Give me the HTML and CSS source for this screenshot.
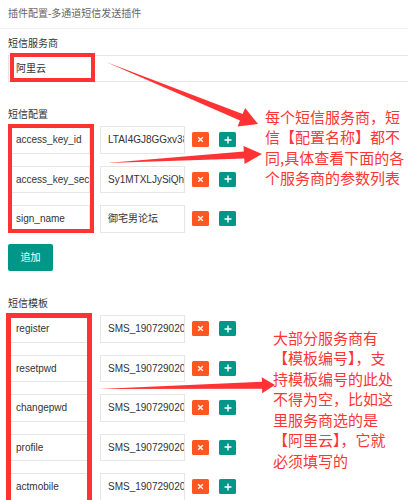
FILE: index.html
```html
<!DOCTYPE html>
<html lang="zh-CN">
<head>
<meta charset="utf-8">
<title>插件配置</title>
<link rel="stylesheet" href="styles.css">
</head>
<body>
<div class="page">
  <div class="header">插件配置-多通道短信发送插件</div>
  <div class="body">
    <div class="section">
      <div class="label">短信服务商</div>
      <div class="input wide">阿里云</div>
    </div>

    <div class="section s-config">
      <div class="label">短信配置</div>
      <div class="rows">
        <div class="row">
          <div class="input name">access_key_id</div>
          <div class="input value">LTAI4GJ8GGxv38Kp2W</div>
          <span class="btn del"><svg width="7" height="7" viewBox="0 0 7 7"><path d="M1.2 1.2L5.8 5.8M5.8 1.2L1.2 5.8" stroke="#fff" stroke-width="1.3"/></svg></span>
          <span class="btn add"><svg width="8" height="8" viewBox="0 0 8 8"><path d="M4 0.5V7.5M0.5 4H7.5" stroke="#fff" stroke-width="1.4"/></svg></span>
        </div>
        <div class="row">
          <div class="input name">access_key_secret</div>
          <div class="input value">Sy1MTXLJySiQhpR8w</div>
          <span class="btn del"><svg width="7" height="7" viewBox="0 0 7 7"><path d="M1.2 1.2L5.8 5.8M5.8 1.2L1.2 5.8" stroke="#fff" stroke-width="1.3"/></svg></span>
          <span class="btn add"><svg width="8" height="8" viewBox="0 0 8 8"><path d="M4 0.5V7.5M0.5 4H7.5" stroke="#fff" stroke-width="1.4"/></svg></span>
        </div>
        <div class="row">
          <div class="input name">sign_name</div>
          <div class="input value">御宅男论坛</div>
          <span class="btn del"><svg width="7" height="7" viewBox="0 0 7 7"><path d="M1.2 1.2L5.8 5.8M5.8 1.2L1.2 5.8" stroke="#fff" stroke-width="1.3"/></svg></span>
          <span class="btn add"><svg width="8" height="8" viewBox="0 0 8 8"><path d="M4 0.5V7.5M0.5 4H7.5" stroke="#fff" stroke-width="1.4"/></svg></span>
        </div>
      </div>
      <div class="btn-primary">追加</div>
    </div>

    <div class="section s-template">
      <div class="label">短信模板</div>
      <div class="rows">
        <div class="row">
          <div class="input name">register</div>
          <div class="input value">SMS_190729020</div>
          <span class="btn del"><svg width="7" height="7" viewBox="0 0 7 7"><path d="M1.2 1.2L5.8 5.8M5.8 1.2L1.2 5.8" stroke="#fff" stroke-width="1.3"/></svg></span>
          <span class="btn add"><svg width="8" height="8" viewBox="0 0 8 8"><path d="M4 0.5V7.5M0.5 4H7.5" stroke="#fff" stroke-width="1.4"/></svg></span>
        </div>
        <div class="row">
          <div class="input name">resetpwd</div>
          <div class="input value">SMS_190729020</div>
          <span class="btn del"><svg width="7" height="7" viewBox="0 0 7 7"><path d="M1.2 1.2L5.8 5.8M5.8 1.2L1.2 5.8" stroke="#fff" stroke-width="1.3"/></svg></span>
          <span class="btn add"><svg width="8" height="8" viewBox="0 0 8 8"><path d="M4 0.5V7.5M0.5 4H7.5" stroke="#fff" stroke-width="1.4"/></svg></span>
        </div>
        <div class="row">
          <div class="input name">changepwd</div>
          <div class="input value">SMS_190729020</div>
          <span class="btn del"><svg width="7" height="7" viewBox="0 0 7 7"><path d="M1.2 1.2L5.8 5.8M5.8 1.2L1.2 5.8" stroke="#fff" stroke-width="1.3"/></svg></span>
          <span class="btn add"><svg width="8" height="8" viewBox="0 0 8 8"><path d="M4 0.5V7.5M0.5 4H7.5" stroke="#fff" stroke-width="1.4"/></svg></span>
        </div>
        <div class="row">
          <div class="input name">profile</div>
          <div class="input value">SMS_190729020</div>
          <span class="btn del"><svg width="7" height="7" viewBox="0 0 7 7"><path d="M1.2 1.2L5.8 5.8M5.8 1.2L1.2 5.8" stroke="#fff" stroke-width="1.3"/></svg></span>
          <span class="btn add"><svg width="8" height="8" viewBox="0 0 8 8"><path d="M4 0.5V7.5M0.5 4H7.5" stroke="#fff" stroke-width="1.4"/></svg></span>
        </div>
        <div class="row">
          <div class="input name">actmobile</div>
          <div class="input value">SMS_190729020</div>
          <span class="btn del"><svg width="7" height="7" viewBox="0 0 7 7"><path d="M1.2 1.2L5.8 5.8M5.8 1.2L1.2 5.8" stroke="#fff" stroke-width="1.3"/></svg></span>
          <span class="btn add"><svg width="8" height="8" viewBox="0 0 8 8"><path d="M4 0.5V7.5M0.5 4H7.5" stroke="#fff" stroke-width="1.4"/></svg></span>
        </div>
      </div>
    </div>
  </div>

  <div class="mark mark-provider"></div>
  <div class="mark mark-config"></div>
  <div class="mark mark-template"></div>

  <svg class="arrows" width="408" height="500" viewBox="0 0 408 500">
    <polygon points="106,62 242.65,113.96 245.11,107.94 258,124 237.55,126.46 240.01,120.44"/>
    <polygon points="107,163 243.83,151.55 243.51,146.06 262,154 244.55,164.02 244.23,158.53"/>
    <polygon points="99,389 261.92,381.8 261.82,377.3 275,385 262.18,393.3 262.08,388.8"/>
  </svg>

  <div class="note note1">每个短信服务商，短<br>信【配置名称】都不<br>同,具体查看下面的各<br>个服务商的参数列表</div>
  <div class="note note2">大部分服务商有<br>【模板编号】，支<br>持模板编号的此处<br>不得为空，比如这<br>里服务商选的是<br>【阿里云】，它就<br>必须填写的</div>
</div>
</body>
</html>
```

FILE: styles.css
```css
html, body {
  margin: 0;
  padding: 0;
  background: #fff;
  overflow: hidden;
}

.page {
  position: relative;
  width: 408px;
  height: 500px;
  overflow: hidden;
  font-family: "Liberation Sans", "Noto Sans CJK SC", sans-serif;
  font-size: 10px;
  color: #333;
}

.header {
  height: 28px;
  line-height: 28px;
  padding-left: 8px;
  color: #666;
  border-bottom: 1px solid #f0f0f0;
}

.body {
  padding: 7px 0 0 8px;
}

.label {
  height: 16px;
  line-height: 16px;
  margin-bottom: 3px;
  color: #333;
}

.input {
  box-sizing: border-box;
  height: 27.5px;
  line-height: 25.5px;
  border: 1px solid #e6e6e6;
  padding-left: 7px;
  white-space: nowrap;
  overflow: hidden;
  background: #fff;
  color: #333;
}

.wide {
  width: 420px;
  height: 27px;
  line-height: 25px;
}

.s-config {
  margin-top: 25px;
}

.s-template {
  margin-top: 25.5px;
}

.rows {
  display: flex;
  flex-direction: column;
  gap: 12px;
}

.row {
  display: flex;
  align-items: center;
  height: 27.5px;
}

.name {
  width: 82px;
  flex: none;
}

.value {
  width: 85px;
  flex: none;
  margin-left: 10px;
}

.btn {
  flex: none;
  width: 17px;
  height: 15px;
  display: flex;
  align-items: center;
  justify-content: center;
  border-radius: 1.5px;
}

.del {
  margin-left: 7px;
  background: #ff5722;
}

.add {
  margin-left: 10px;
  background: #009688;
}

.btn-primary {
  margin-top: 11px;
  width: 45px;
  height: 27px;
  line-height: 27px;
  text-align: center;
  background: #009688;
  color: #fff;
  border-radius: 2px;
}

.mark {
  position: absolute;
  box-sizing: border-box;
  border-style: solid;
  border-color: #ff3333;
}

.mark-provider {
  left: 10px;
  top: 53px;
  width: 85px;
  height: 29px;
  border-width: 4px;
}

.mark-config {
  left: 8px;
  top: 124px;
  width: 86px;
  height: 109px;
  border-width: 4px;
}

.mark-template {
  left: 6px;
  top: 313px;
  width: 86px;
  height: 210px;
  border-width: 5px;
}

.arrows {
  position: absolute;
  left: 0;
  top: 0;
  pointer-events: none;
  fill: #ff3333;
}

.note {
  position: absolute;
  color: #ff3535;
  font-family: "Noto Sans CJK SC", sans-serif;
  font-size: 15px;
  line-height: 20.5px;
  white-space: nowrap;
}

.note1 {
  left: 265px;
  top: 106.75px;
}

.note2 {
  left: 273px;
  top: 327.75px;
}
```
